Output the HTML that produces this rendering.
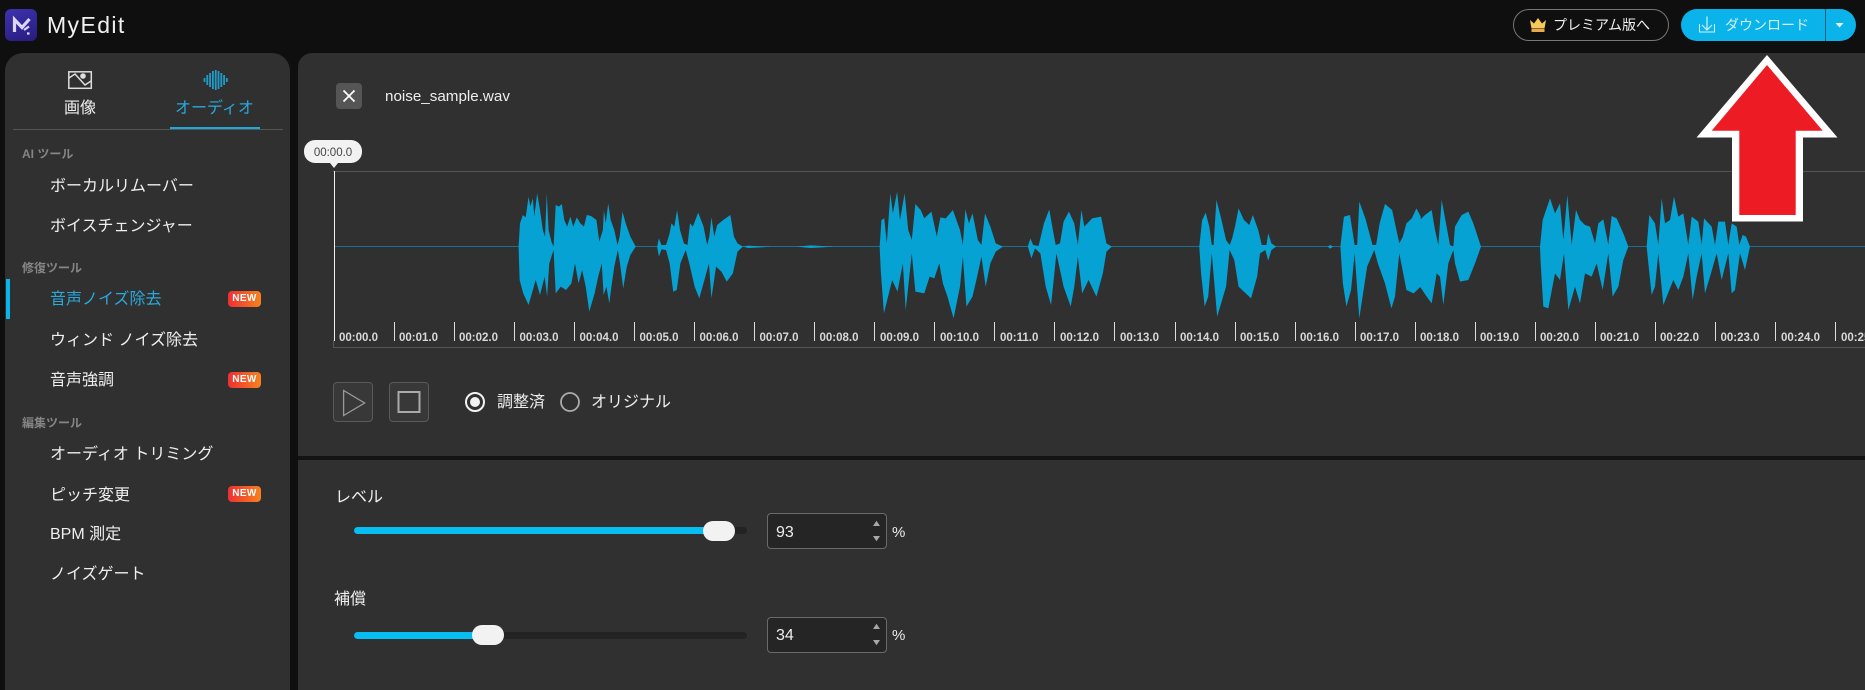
<!DOCTYPE html>
<html lang="ja"><head><meta charset="utf-8"><title>MyEdit</title>
<style>
html,body{margin:0;padding:0;width:1865px;height:690px;overflow:hidden;background:#0f0f0f}
body{position:relative;font-family:"Liberation Sans","Noto Sans CJK JP",sans-serif;color:#eee}
div,span.t{position:absolute;box-sizing:border-box}
.t{position:absolute;white-space:nowrap;line-height:24px;height:24px;font-size:16px}
.sec{font-size:12px;font-weight:bold;color:#858585;left:22px}
.it{left:50px;color:#efefef}
.new{left:228px;width:33px;height:16px;border-radius:4px;background:linear-gradient(90deg,#ee2f33,#f5821f);color:#fff;font:bold 10px/16px "Liberation Sans",sans-serif;text-align:center;letter-spacing:.4px}
.ib{background:#252525;border:1px solid #6a6a6a;border-radius:4px;left:767px;width:120px;height:36px}
.tr{left:354px;width:393px;height:7px;background:#232323;border-radius:4px}
.fl{left:354px;height:7px;background:#08bdf2;border-radius:4px}
.th{width:32px;height:20px;background:#f2f2f2;border-radius:10px}
svg{position:absolute;left:0;top:0;overflow:visible}
</style></head><body>

<div style="left:5px;top:53px;width:285px;height:637px;background:#303030;border-radius:18px 18px 0 0"></div>
<div style="left:298px;top:53px;width:1567px;height:637px;background:#303030;border-radius:14px 0 0 0"></div>
<div style="left:298px;top:456px;width:1567px;height:4px;background:#131313"></div>

<div style="left:5px;top:9px;width:32px;height:32px;border-radius:6px;background:linear-gradient(160deg,#3d33ad,#281b7e)"></div>
<span class="t" style="left:47px;top:13px;font-size:23px;letter-spacing:1.4px;color:#f0f0f0">MyEdit</span>

<div style="left:1513px;top:9px;width:156px;height:32px;border:1px solid #777;border-radius:16px"></div>
<span class="t" style="left:1553px;top:13px;font-size:14px;color:#eee">プレミアム版へ</span>
<div style="left:1681px;top:9px;width:175px;height:32px;border-radius:16px;background:#0ab3e9"></div>
<div style="left:1825px;top:9px;width:1px;height:32px;background:#0b5f7d"></div>
<span class="t" style="left:1725px;top:13px;font-size:14px;color:#d4f1fb">ダウンロード</span>

<span class="t" style="left:64px;top:97px;color:#eee">画像</span>
<span class="t" style="left:175px;top:97px;color:#29a9dc">オーディオ</span>
<div style="left:13px;top:129px;width:270px;height:1px;background:#555"></div>
<div style="left:170px;top:127px;width:90px;height:2px;background:#1fa9d8"></div>

<span class="t sec" style="top:142px">AI ツール</span>
<span class="t it" style="top:175px">ボーカルリムーバー</span>
<span class="t it" style="top:215px">ボイスチェンジャー</span>
<span class="t sec" style="top:256px">修復ツール</span>
<div style="left:6px;top:279px;width:4px;height:40px;background:#0ab3e9"></div>
<span class="t it" style="top:288px;color:#29a9dc">音声ノイズ除去</span>
<div class="new" style="top:291px">NEW</div>
<span class="t it" style="top:329px">ウィンド ノイズ除去</span>
<span class="t it" style="top:369px">音声強調</span>
<div class="new" style="top:372px">NEW</div>
<span class="t sec" style="top:411px">編集ツール</span>
<span class="t it" style="top:443px">オーディオ トリミング</span>
<span class="t it" style="top:484px">ピッチ変更</span>
<div class="new" style="top:486px">NEW</div>
<span class="t it" style="top:523px">BPM 測定</span>
<span class="t it" style="top:563px">ノイズゲート</span>

<div style="left:336px;top:83px;width:26px;height:26px;border-radius:4px;background:#555"></div>
<span class="t" style="left:385px;top:85px;font-size:15.2px;color:#eee">noise_sample.wav</span>

<div style="left:304px;top:140px;width:58px;height:23px;border-radius:11px;background:#f2f2f2"></div>
<span class="t" style="left:304px;width:58px;text-align:center;top:142px;font-size:11.5px;line-height:23px;height:23px;color:#444">00:00.0</span>

<div style="left:333px;top:382px;width:40px;height:40px;border:1px solid #5a5a5a;border-radius:4px;background:#383838"></div>
<div style="left:389px;top:382px;width:40px;height:40px;border:1px solid #5a5a5a;border-radius:4px;background:#383838"></div>
<span class="t" style="left:497px;top:391px">調整済</span>
<span class="t" style="left:591px;top:391px">オリジナル</span>

<span class="t" style="left:335px;top:486px">レベル</span>
<div class="tr" style="top:527px"></div><div class="fl" style="top:527px;width:355px"></div><div class="th" style="left:703px;top:521px"></div>
<div class="ib" style="top:513px"></div>
<span class="t" style="left:776px;top:521px;font-size:16px">93</span>
<span class="t" style="left:892px;top:521px;font-size:15px">%</span>

<span class="t" style="left:334px;top:588px">補償</span>
<div class="tr" style="top:632px"></div><div class="fl" style="top:632px;width:125px"></div><div class="th" style="left:472px;top:625px"></div>
<div class="ib" style="top:617px"></div>
<span class="t" style="left:776px;top:624px;font-size:16px">34</span>
<span class="t" style="left:892px;top:624px;font-size:15px">%</span>

<svg width="1865" height="690" viewBox="0 0 1865 690">
 <!-- logo -->
 <path d="M14.500 32V19.500L22 27.500 29.500 19" fill="none" stroke="#dcd7ff" stroke-width="3.200"/>
 <path d="M24 30l5-3.500M27 33.500h2.500" fill="none" stroke="#dcd7ff" stroke-width="2.200"/>
 <!-- crown -->
 <path d="M1530 20l4 3.500 4-5.500 4 5.500 4-3.500-1.500 8.500h-13z" fill="#f5c95a"/>
 <rect x="1531.500" y="29" width="13" height="3" fill="#e9a94b"/>
 <!-- download icon -->
 <path d="M1699.500 24v8h15v-8" fill="none" stroke="#d4f1fb" stroke-width="1"/>
 <path d="M1707 16.500v13.500M1702 25l5 5 5-5" fill="none" stroke="#d4f1fb" stroke-width="1.200"/>
 <path d="M1835.500 23h8l-4 4.500z" fill="#e6f7fd"/>
 <!-- tab image icon -->
 <rect x="68.800" y="71.800" width="22.500" height="16.500" fill="none" stroke="#ddd" stroke-width="1.500"/>
 <circle cx="83" cy="76" r="2.800" fill="#ddd"/>
 <path d="M69 78l6-4 10 11 6-4" fill="none" stroke="#ddd" stroke-width="1.500"/>
 <!-- tab audio icon -->
 <path d="M204.500 78v4M207.300 75v10M210.100 73v14M212.900 71v18M215.700 70v20M218.500 71v18M221.300 73v14M224.100 75v10M226.900 78v4" stroke="#1f9cc8" stroke-width="1.800" fill="none"/>
 <!-- close -->
 <path d="M343.500 90.500l11 11M354.500 90.500l-11 11" stroke="#fff" stroke-width="1.800"/>
 <!-- play/stop -->
 <path d="M343.600 390.500v25l21-12.500z" fill="none" stroke="#999" stroke-width="1.300"/>
 <rect x="398.500" y="392" width="21" height="20" fill="none" stroke="#aaa" stroke-width="2"/>
 <!-- radios -->
 <circle cx="475" cy="402" r="9" fill="none" stroke="#f2f2f2" stroke-width="2"/>
 <circle cx="475" cy="402" r="5" fill="#f2f2f2"/>
 <circle cx="570" cy="402" r="9" fill="none" stroke="#aaa" stroke-width="1.800"/>
 <!-- spinners -->
 <path d="M873 526l3.500-5.300 3.500 5.300zM873 536h7l-3.500 5.300zM873 629l3.500-5.300 3.500 5.300zM873 640h7l-3.500 5.300z" fill="#a8a8a8"/>
 <!-- timeline frame -->
 <path d="M333 171.500H1865M333 347.500H1865" stroke="#555" stroke-width="1" fill="none"/>
 <path d="M333.500 340v7" stroke="#555"/>
 <path d="M334 246.500H1865" stroke="#1b6f8e" stroke-width="1"/>
 <path d="M330 163h8l-4 5z" fill="#f2f2f2"/>
 <path d="M334.500 171V341" stroke="#f0f0f0" stroke-width="1"/>
 <path d="M394.500 322v19M454.500 322v19M514.500 322v19M574.500 322v19M634.500 322v19M694.500 322v19M754.500 322v19M814.500 322v19M874.500 322v19M934.500 322v19M994.500 322v19M1054.500 322v19M1114.500 322v19M1175.500 322v19M1235.500 322v19M1295.500 322v19M1355.500 322v19M1415.500 322v19M1475.500 322v19M1535.500 322v19M1595.500 322v19M1655.500 322v19M1715.500 322v19M1775.500 322v19M1835.500 322v19" stroke="#ddd" stroke-width="1" fill="none"/>
 <g font-family="'Liberation Sans',sans-serif" font-size="11.500" font-weight="bold" fill="#d8d8d8">
  <text x="339" y="341">00:00.0</text><text x="399" y="341">00:01.0</text><text x="459" y="341">00:02.0</text><text x="519.500" y="341">00:03.0</text><text x="579.500" y="341">00:04.0</text><text x="639.500" y="341">00:05.0</text><text x="699.500" y="341">00:06.0</text><text x="759.500" y="341">00:07.0</text><text x="819.500" y="341">00:08.0</text><text x="880" y="341">00:09.0</text><text x="940" y="341">00:10.0</text><text x="1000" y="341">00:11.0</text><text x="1060" y="341">00:12.0</text><text x="1120" y="341">00:13.0</text><text x="1180" y="341">00:14.0</text><text x="1240" y="341">00:15.0</text><text x="1300" y="341">00:16.0</text><text x="1360" y="341">00:17.0</text><text x="1420" y="341">00:18.0</text><text x="1480" y="341">00:19.0</text><text x="1540" y="341">00:20.0</text><text x="1600" y="341">00:21.0</text><text x="1660" y="341">00:22.0</text><text x="1720.500" y="341">00:23.0</text><text x="1781" y="341">00:24.0</text><text x="1841" y="341">00:25.0</text>
 </g>
 <!-- waveform -->
 <g fill="#05a2d3">
  <g transform="translate(300,130) scale(.35714,.33333)">
   <path d="M612,350L616,280 624,255 632,262 640,200 645,230 652,205 656,260 664,190 672,240 680,300 686,320 691,190 696,300 704,335 710,350 716,225 725,230 733,222 740,270 748,290 757,260 765,290 775,262 785,280 795,290 803,255 815,258 830,270 838,335 848,300 851,240 856,280 863,220 870,270 880,300 889,345 895,320 903,245 912,280 925,320 940,350 925,375 915,410 905,475 896,400 890,360 880,410 872,470 866,520 858,470 850,495 845,400 835,440 825,490 810,545 800,470 790,420 780,460 770,400 760,460 745,480 730,470 716,490 710,360 698,400 692,500 685,440 672,495 660,450 640,525 625,490 615,450Z"/>
   <path d="M1000,350L1005,325 1012,345 1025,345 1035,310 1040,280 1048,290 1056,240 1064,300 1075,340 1085,345 1092,280 1100,290 1115,248 1130,290 1140,345 1146,320 1152,262 1160,320 1168,285 1185,270 1205,255 1215,320 1225,340 1240,350 1225,365 1212,430 1195,455 1180,425 1165,410 1152,505 1145,400 1135,440 1118,505 1105,470 1090,400 1080,360 1065,400 1055,480 1045,485 1035,400 1025,360 1012,358 1005,380Z"/>
   <path d="M1240,350L1255,347 1290,349 1320,350 1290,352 1255,354ZM1390,350L1430,346 1460,348 1495,350 1460,352 1430,354Z"/>
  </g>
  <g transform="translate(860,130) scale(.35714,.33333)">
   <path d="M55,350L60,270 68,265 75,340 85,190 92,250 104,185 112,270 125,190 135,300 145,330 155,222 170,240 180,265 200,245 215,320 225,262 240,265 260,240 280,300 288,345 295,238 305,280 315,250 330,330 340,345 350,250 365,290 380,340 400,350 380,365 365,400 352,470 340,380 328,440 315,500 298,530 288,380 280,470 262,565 245,500 232,460 222,400 208,445 195,440 180,490 155,485 145,370 128,540 120,400 105,485 90,450 67,550 58,420Z"/>
   <path d="M470,350L477,325 485,345 500,348 515,280 530,238 540,300 548,345 560,340 570,275 585,245 600,280 610,345 620,240 628,290 650,265 675,260 690,340 705,350 690,365 680,430 662,500 640,450 622,490 610,380 600,470 590,530 570,470 550,370 535,525 520,470 505,370 490,355 480,385Z"/>
   <path d="M950,350L958,270 968,248 978,290 985,345 990,345 998,210 1010,260 1025,330 1035,345 1042,325 1050,290 1060,235 1075,270 1090,285 1100,255 1115,300 1125,345 1138,345 1143,310 1152,340 1165,350 1152,360 1143,392 1135,360 1120,370 1112,440 1095,505 1080,490 1060,470 1048,390 1035,360 1025,470 1000,560 985,370 975,500 965,530 955,430Z"/>
   <path d="M1310,350L1316,345 1325,350 1316,356Z"/>
   <path d="M1345,350L1355,260 1372,255 1385,345 1392,345 1398,215 1415,265 1435,345 1445,345 1455,280 1470,222 1490,240 1510,340 1520,320 1530,280 1545,265 1558,235 1570,260 1570,470 1550,490 1530,480 1510,370 1498,500 1488,535 1470,460 1450,400 1440,360 1420,410 1398,565 1385,370 1375,480 1362,530 1352,460Z"/>
  </g>
  <g transform="translate(1420,130) scale(.33333,.33333)">
   <path d="M0,270L15,255 35,240 45,300 55,345 65,210 78,280 90,345 100,350 105,290 125,255 145,245 160,280 183,350 165,400 145,450 120,455 105,400 100,360 85,400 70,525 60,440 50,430 35,520 20,500 0,470Z"/>
   <path d="M360,350L368,270 390,205 405,250 420,220 430,330 442,195 455,345 468,240 480,270 495,285 510,290 525,340 535,280 550,268 565,345 575,258 590,265 610,310 625,350 610,390 595,470 578,500 565,370 548,480 530,400 515,440 495,430 480,520 465,470 445,540 432,370 420,450 405,430 385,535 370,530 362,400Z"/>
   <path d="M680,350L688,255 705,280 715,345 725,205 735,280 750,270 762,200 775,260 790,250 805,345 815,260 835,275 845,345 852,265 875,290 885,345 895,275 915,275 925,345 935,280 950,290 958,345 968,315 978,320 990,350 975,420 960,370 945,480 935,490 925,370 905,450 890,370 870,440 855,490 845,370 830,440 818,510 805,370 790,440 775,480 760,450 740,500 730,525 715,370 705,470 695,495 685,400Z"/>
  </g>
 </g>
 <!-- red arrow -->
 <path d="M1767 55L1837.500 137.500H1803V221.500H1732V137.500H1696.500Z" fill="#fff"/>
 <path d="M1767 65L1822.700 130.700H1795.700V215H1739.300V130.700H1711.700Z" fill="#ed1c24"/>
</svg>
</body></html>
